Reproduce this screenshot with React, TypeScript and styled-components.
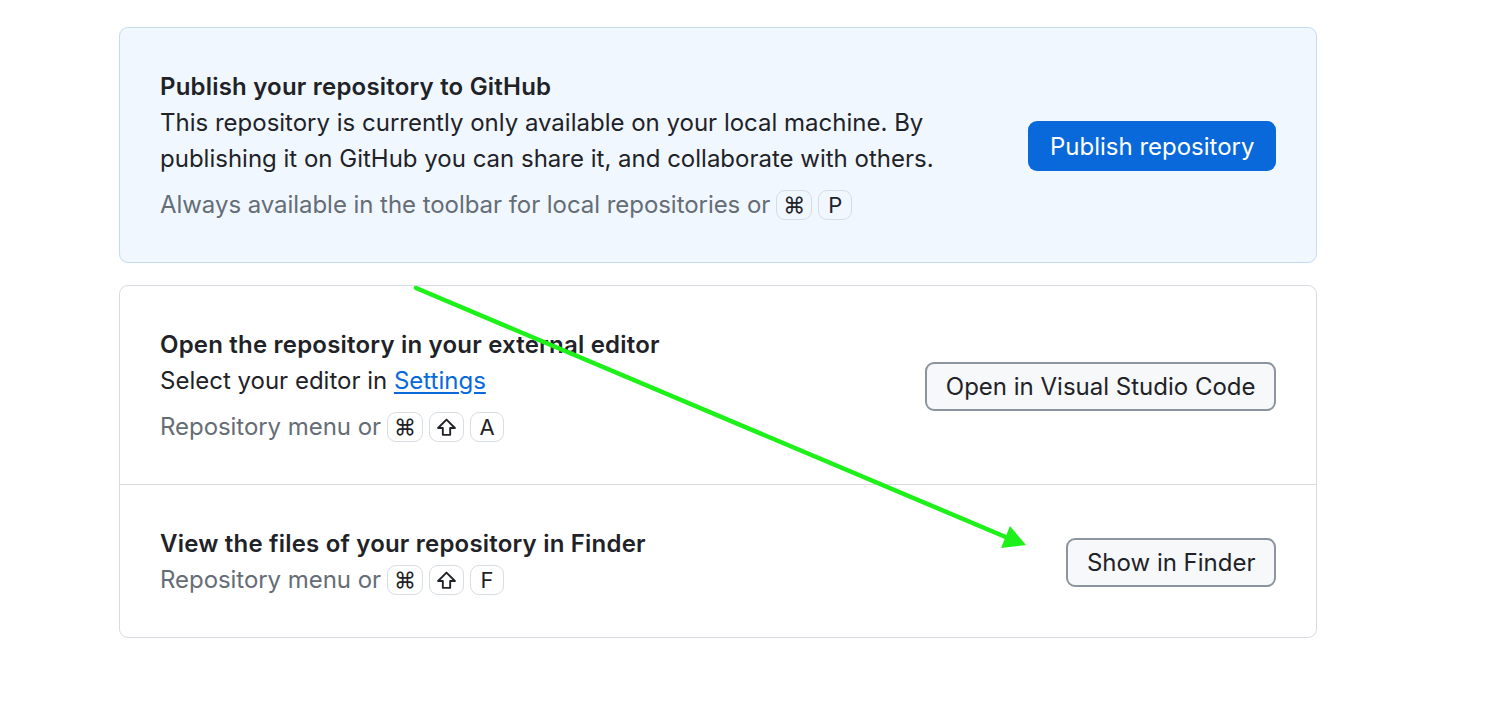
import React from "react";
import styled, { createGlobalStyle } from "styled-components";

const GlobalStyle = createGlobalStyle`
  html, body {
    margin: 0;
    padding: 0;
    background: #ffffff;
  }
  body {
    font-family: Inter, "Noto Sans", "Liberation Sans", sans-serif;
    color: #1f2328;
    -webkit-font-smoothing: antialiased;
  }
`;

const Page = styled.div`
  position: relative;
  width: 1510px;
  height: 706px;
  box-sizing: border-box;
  padding: 27px 0 0 119px;
  display: flex;
  flex-direction: column;
  gap: 22px;
  overflow: hidden;
`;

const Card = styled.section<{ $tone?: "info" | "plain" }>`
  width: 1198px;
  box-sizing: border-box;
  border-radius: 9px;
  border: 1.5px solid ${(p) => (p.$tone === "info" ? "#c3dcf2" : "#d8dce1")};
  background: ${(p) => (p.$tone === "info" ? "#f0f7ff" : "#ffffff")};
  display: flex;
  flex-direction: column;
`;

const Row = styled.div`
  display: flex;
  align-items: center;
  justify-content: space-between;
  padding: 41px 40px 39px 40px;
  & + & {
    border-top: 1.5px solid #d8dce1;
  }
`;

const Text = styled.div`
  display: flex;
  flex-direction: column;
`;

const Title = styled.div`
  font-size: 24px;
  line-height: 36px;
  font-weight: 600;
  letter-spacing: 0.2px;
  color: #1f2328;
`;

const Description = styled.div`
  font-size: 24px;
  line-height: 36px;
  color: #1f2328;
  max-width: 800px;
`;

const Link = styled.a`
  color: #0969da;
  text-decoration: underline;
  text-underline-offset: 3px;
  cursor: pointer;
`;

const Hint = styled.div<{ $spaced?: boolean }>`
  display: flex;
  align-items: center;
  gap: 6px;
  font-size: 24px;
  line-height: 36px;
  letter-spacing: -0.05px;
  color: #656d76;
  margin-top: ${(p) => (p.$spaced ? "10px" : "0")};
`;

const Keys = styled.span`
  display: inline-flex;
  gap: 6px;
`;

const Key = styled.kbd`
  display: inline-flex;
  align-items: center;
  justify-content: center;
  min-width: 34px;
  height: 30px;
  box-sizing: border-box;
  padding: 0 6px;
  border: 1.5px solid #d8dde2;
  border-radius: 9px;
  font-family: Inter, "DejaVu Sans", sans-serif;
  font-size: 22px;
  color: #1f2328;
  background: transparent;
`;

const Button = styled.button<{ $primary?: boolean }>`
  flex: none;
  box-sizing: border-box;
  height: ${(p) => (p.$primary ? "50px" : "49px")};
  padding: 0 ${(p) => (p.$primary ? "21.5px" : "18.5px")};
  border-radius: 9px;
  font-family: Inter, "Noto Sans", "Liberation Sans", sans-serif;
  font-size: 24px;
  cursor: pointer;
  border: ${(p) => (p.$primary ? "none" : "2px solid #8c959f")};
  background: ${(p) => (p.$primary ? "#0969da" : "#f6f8fa")};
  color: ${(p) => (p.$primary ? "#ffffff" : "#1f2328")};
`;

const Overlay = styled.svg`
  position: absolute;
  inset: 0;
  pointer-events: none;
`;

const ShiftIcon = () => (
  <svg width="21" height="21" viewBox="0 0 20 20" aria-hidden>
    <path
      d="M10 2.5 L18 10.5 H13.5 V17 H6.5 V10.5 H2 Z"
      fill="none"
      stroke="#1f2328"
      strokeWidth="1.8"
      strokeLinejoin="round"
    />
  </svg>
);

export default function App() {
  return (
    <>
      <GlobalStyle />
      <Page>
        <Card $tone="info">
          <Row>
            <Text>
              <Title>Publish your repository to GitHub</Title>
              <Description>
                This repository is currently only available on your local machine. By
                publishing it on GitHub you can share it, and collaborate with others.
              </Description>
              <Hint $spaced>
                Always available in the toolbar for local repositories or
                <Keys>
                  <Key>⌘</Key>
                  <Key>P</Key>
                </Keys>
              </Hint>
            </Text>
            <Button $primary>Publish repository</Button>
          </Row>
        </Card>

        <Card $tone="plain">
          <Row>
            <Text>
              <Title>Open the repository in your external editor</Title>
              <Description>
                Select your editor in <Link>Settings</Link>
              </Description>
              <Hint $spaced>
                Repository menu or
                <Keys>
                  <Key>⌘</Key>
                  <Key>
                    <ShiftIcon />
                  </Key>
                  <Key>A</Key>
                </Keys>
              </Hint>
            </Text>
            <Button>Open in Visual Studio Code</Button>
          </Row>
          <Row>
            <Text>
              <Title>View the files of your repository in Finder</Title>
              <Hint>
                Repository menu or
                <Keys>
                  <Key>⌘</Key>
                  <Key>
                    <ShiftIcon />
                  </Key>
                  <Key>F</Key>
                </Keys>
              </Hint>
            </Text>
            <Button>Show in Finder</Button>
          </Row>
        </Card>

        <Overlay width="1510" height="706" viewBox="0 0 1510 706">
          <line
            x1="416"
            y1="288"
            x2="1008"
            y2="538"
            stroke="#1ef01a"
            strokeWidth="4.5"
            strokeLinecap="round"
          />
          <polygon points="1026,545 1010,526 1001,548" fill="#1ef01a" />
        </Overlay>
      </Page>
    </>
  );
}
